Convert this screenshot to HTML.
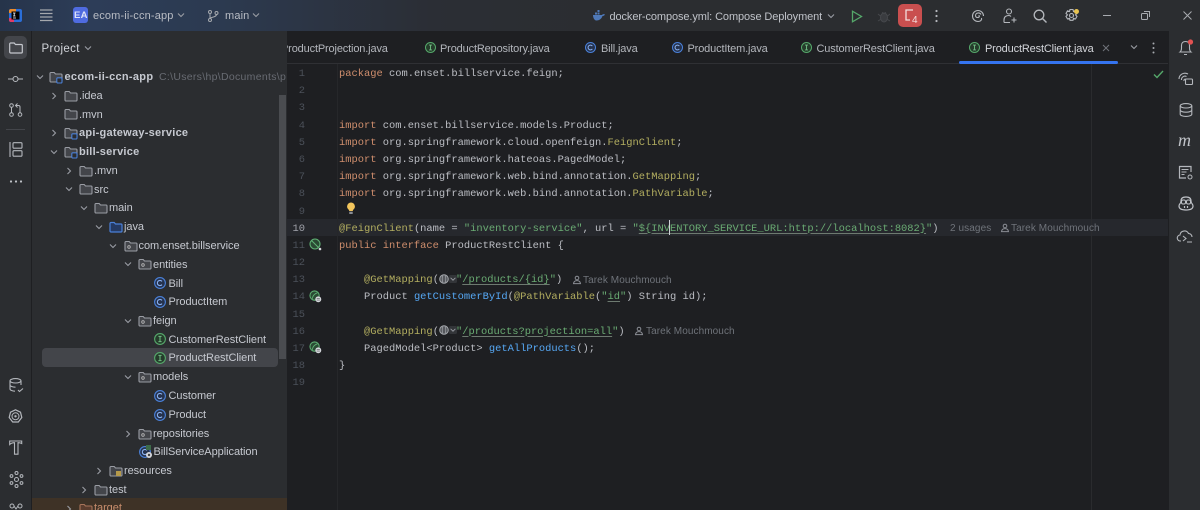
<!DOCTYPE html>
<html><head><meta charset="utf-8">
<style>
html,body{margin:0;padding:0;background:#1e1f22}
#r{position:relative;width:1200px;height:510px;overflow:hidden;background:#1e1f22;font-family:"Liberation Sans",sans-serif;color:#c9ccd3}
.a{position:absolute}
.t{position:absolute;white-space:pre;font-size:11px;line-height:14px;color:#c6c9d0;letter-spacing:-.05px}
.c{position:absolute;white-space:pre;font-family:"Liberation Mono",monospace;font-size:10.42px;line-height:14px;color:#bcbec4;left:339px;margin-top:1px}
.n{position:absolute;white-space:pre;font-family:"Liberation Mono",monospace;font-size:10.42px;line-height:14px;color:#4b5059;width:18px;text-align:right;left:287px;margin-top:1px}
.k{color:#cf8e6d}.g{color:#6aab73}.y{color:#b3ae60}.b{color:#56a8f5}.u{text-decoration:underline;text-decoration-color:#6d7a70;text-underline-offset:2px}
.h{position:absolute;white-space:pre;font-size:10px;line-height:14px;color:#6f737a;letter-spacing:.09px;margin-top:1px}
svg{position:absolute;overflow:visible;fill:none}
</style></head><body><div id="r">
<svg width="0" height="0"><defs>
<symbol id="f" viewBox="0 0 14 14"><path d="M1 3.5a1 1 0 0 1 1-1h3.2l1.3 1.5h5.5a1 1 0 0 1 1 1v6a1 1 0 0 1-1 1H2a1 1 0 0 1-1-1z" fill="#43454a" stroke="#9a9da4" stroke-width="1.1"/></symbol>
<symbol id="m" viewBox="0 0 14 14"><path d="M1 3.5a1 1 0 0 1 1-1h3.2l1.3 1.5h5.5a1 1 0 0 1 1 1v6a1 1 0 0 1-1 1H2a1 1 0 0 1-1-1z" fill="#43454a" stroke="#9a9da4" stroke-width="1.1"/><rect x="7.8" y="7.8" width="5.2" height="5.2" rx="1" fill="#2b2d30" stroke="#4a80d8" stroke-width="1.1"/></symbol>
<symbol id="p" viewBox="0 0 14 14"><path d="M1 3.5a1 1 0 0 1 1-1h3.2l1.3 1.5h5.5a1 1 0 0 1 1 1v6a1 1 0 0 1-1 1H2a1 1 0 0 1-1-1z" fill="#43454a" stroke="#9a9da4" stroke-width="1.1"/><circle cx="5" cy="8" r="1.3" stroke="#bbb" stroke-width=".8"/></symbol>
<symbol id="j" viewBox="0 0 14 14"><path d="M1 3.5a1 1 0 0 1 1-1h3.2l1.3 1.5h5.5a1 1 0 0 1 1 1v6a1 1 0 0 1-1 1H2a1 1 0 0 1-1-1z" fill="#253a63" stroke="#4a80d8" stroke-width="1.2"/></symbol>
<symbol id="cc" viewBox="0 0 14 14"><circle cx="7" cy="7" r="5.4" fill="#25324d" stroke="#4a80d8" stroke-width="1.1"/><path d="M9 5.4A2.6 2.6 0 1 0 9 8.6" stroke="#8ab0ee" stroke-width="1.1"/></symbol>
<symbol id="ci" viewBox="0 0 14 14"><circle cx="7" cy="7" r="5.4" fill="#253c2b" stroke="#55a76a" stroke-width="1.1"/><path d="M5.4 4.4h3.2M5.4 9.6h3.2M7 4.4v5.2" stroke="#70bb83" stroke-width="1"/></symbol>
<symbol id="d" viewBox="0 0 10 10"><path d="M2 3.5l3 3 3-3" stroke="#9a9da4" stroke-width="1.1"/></symbol>
<symbol id="e" viewBox="0 0 10 10"><path d="M3.5 2l3 3-3 3" stroke="#9a9da4" stroke-width="1.1"/></symbol>
<symbol id="gut" viewBox="0 0 14 14"><circle cx="6" cy="6" r="5" fill="#2a4a33" stroke="#5fb074" stroke-width="1.1"/><path d="M3.5 9.5C4 6 6 4 9 3" stroke="#5fb074"/><circle cx="10" cy="10" r="3.2" fill="#d5d7dc"/><path d="M8.3 9.2h3.4M8.3 10.8h3.4" stroke="#555" stroke-width=".7"/></symbol>
<symbol id="usr" viewBox="0 0 10 10"><circle cx="5" cy="3" r="1.8" stroke="#8a8d94"/><path d="M1.5 8.6c.3-2.4 1.6-3 3.5-3s3.2.6 3.5 3z" stroke="#8a8d94"/></symbol>
</defs></svg>

<!-- top bar -->
<div class="a" style="left:0;top:0;width:1200px;height:31px;background:linear-gradient(90deg,#26344a 0,#2d3d58 90px,#2c3a50 220px,#2b2e35 430px,#2b2d30 620px)"></div>
<svg style="left:9px;top:9px" width="13" height="13"><rect x="0" y="0" width="13" height="13" rx="2" fill="#2a6ed8"/><path d="M0 2a2 2 0 0 1 2-2h5v4H0z" fill="#e98a2c"/><path d="M0 9h5v4H2a2 2 0 0 1-2-2z" fill="#e23b66"/><rect x="2.5" y="2.5" width="8" height="8" fill="#000"/><path d="M4 4h2.5M5.2 4v3M4 7h2.5M4 9h3" stroke="#fff" stroke-width=".8"/></svg>
<svg style="left:40px;top:9px" width="13" height="13"><path d="M0 1h12.500M0 4.500h12.500M0 8h12.500M0 11.500h12.500" stroke="#a5a8ad" stroke-width="1.200"/></svg>
<div class="a" style="left:73px;top:7px;width:15px;height:16px;border-radius:3px;background:#4f6be0"></div>
<div class="t" style="left:74px;top:9px;font-size:9.500px;font-weight:bold;color:#dfe3f7;letter-spacing:.3px">EA</div>
<div class="t" style="left:93px;top:9px;color:#b8bcc4;letter-spacing:.15px">ecom-ii-ccn-app</div>
<svg style="left:176px;top:10px" width="10" height="10"><use href="#d"/></svg>
<svg style="left:208px;top:10px" width="11" height="12"><circle cx="2" cy="2" r="1.500" stroke="#a5a8ad"/><circle cx="2" cy="10" r="1.500" stroke="#a5a8ad"/><circle cx="8.500" cy="3" r="1.500" stroke="#a5a8ad"/><path d="M2 3.500v5M8.500 4.500c0 2-3 2.500-6.500 3.500" stroke="#a5a8ad"/></svg>
<div class="t" style="left:225px;top:9px;color:#b8bcc4;letter-spacing:.15px">main</div>
<svg style="left:251px;top:10px" width="10" height="10"><use href="#d"/></svg>

<svg style="left:592px;top:9px" width="14" height="13"><path d="M1 6h9c.5-1 2-1.200 3-.6-.5 1.300-1.500 1.600-2.500 1.600-1 3-3.500 4.500-6 4.500C2.500 11.500 1 9 1 6z" fill="#4f79b8"/><rect x="3" y="3.500" width="2" height="2" fill="#4f79b8"/><rect x="5.500" y="3.500" width="2" height="2" fill="#4f79b8"/><rect x="5.500" y="1" width="2" height="2" fill="#4f79b8"/></svg>
<div class="t" style="left:609.500px;top:9.500px;color:#bfc2c8;letter-spacing:-.1px">docker-compose.yml: Compose Deployment</div>
<svg style="left:826px;top:11px" width="10" height="10"><use href="#d"/></svg>
<svg style="left:851px;top:10px" width="12" height="13"><path d="M1.500 1.200v10.600L10.500 6.500z" stroke="#55a76a" stroke-width="1.300"/></svg>
<svg style="left:878px;top:10px" width="12" height="13"><ellipse cx="6" cy="7.500" rx="3.500" ry="4.500" fill="#3a3c40" stroke="#46484c"/><path d="M0 4l2.500 2M12 4L9.500 6M0 11l2.500-1.500M12 11L9.500 9.500M4 2.500l2 1 2-1" stroke="#46484c"/></svg>
<div class="a" style="left:898px;top:4px;width:24px;height:23px;border-radius:5px;background:#c94f4f"></div>
<svg style="left:904px;top:9px" width="14" height="15"><path d="M9 1H2v10h4" stroke="#f3dede" stroke-width="1.300"/></svg>
<div class="t" style="left:912px;top:14px;font-size:10px;color:#f3dede;letter-spacing:0">4</div>
<svg style="left:935px;top:9px" width="3" height="14"><circle cx="1.500" cy="2" r="1.100" fill="#b4b7bc"/><circle cx="1.500" cy="7" r="1.100" fill="#b4b7bc"/><circle cx="1.500" cy="12" r="1.100" fill="#b4b7bc"/></svg>
<svg style="left:971px;top:9px" width="14" height="14"><path d="M12.500 7A5.500 5.500 0 1 0 7 12.500c3 0 4-2 3.500-3.500M10 5.500C9 3.500 6 3.500 5 5s-.5 3.500 1.500 3.500S9 6.500 7.500 6.500" stroke="#b4b7bc" stroke-width="1.100"/></svg>
<svg style="left:1002px;top:8px" width="16" height="16"><circle cx="7" cy="3.500" r="2.500" stroke="#b4b7bc" stroke-width="1.100"/><path d="M2 14.500V12c0-3 1.500-4.500 5-4.500 1 0 1.500.5 2 1M2 14.500h6M12 9.500v5M9.500 12h5" stroke="#b4b7bc" stroke-width="1.100"/></svg>
<svg style="left:1033px;top:9px" width="14" height="14"><circle cx="6" cy="6" r="4.800" stroke="#b4b7bc" stroke-width="1.300"/><path d="M9.500 9.500l4 4" stroke="#b4b7bc" stroke-width="1.400"/></svg>
<svg style="left:1064px;top:8px" width="16" height="16"><path d="M6 1.500h3l.5 2 2-.7 1.500 2.600-1.500 1.500 1.500 1.500-1.500 2.600-2-.7-.5 2H6l-.5-2-2 .7L2 8.400 3.500 6.900 2 5.400l1.500-2.600 2 .7z" stroke="#b4b7bc" stroke-width="1.100"/><circle cx="7.500" cy="7.500" r="2" stroke="#b4b7bc" stroke-width="1.100"/><circle cx="12.500" cy="3.500" r="2.500" fill="#e8c34f"/></svg>
<div class="a" style="left:1103px;top:15px;width:8px;height:1px;background:#a8abb0"></div>
<svg style="left:1141px;top:11px" width="9" height="9"><rect x=".5" y="2.500" width="6" height="6" rx="1" stroke="#a8abb0"/><path d="M3 .5h5.500V6" stroke="#a8abb0"/></svg>
<svg style="left:1183px;top:11px" width="9" height="9"><path d="M.5.500l8 8M8.500.500l-8 8" stroke="#a8abb0"/></svg>

<!-- left stripe -->
<div class="a" style="left:0;top:31px;width:31px;height:479px;background:#2b2d30;border-right:1px solid #1e1f22"></div>
<div class="a" style="left:4px;top:36px;width:23px;height:23px;border-radius:5px;background:#43454a"></div>
<svg style="left:9px;top:42px" width="14" height="12"><path d="M.7 2a1 1 0 0 1 1-1h3.500l1.300 1.500h5.800a1 1 0 0 1 1 1v6.500a1 1 0 0 1-1 1H1.700a1 1 0 0 1-1-1z" stroke="#c5c8ce" stroke-width="1.200"/></svg>
<svg style="left:8px;top:74px" width="15" height="10"><circle cx="7.500" cy="5" r="2.500" stroke="#b4b7bc" stroke-width="1.100"/><path d="M0 5h5M10 5h5" stroke="#b4b7bc" stroke-width="1.100"/></svg>
<svg style="left:9px;top:103px" width="14" height="14"><circle cx="2.500" cy="2.500" r="1.800" stroke="#b4b7bc"/><circle cx="2.500" cy="11.500" r="1.800" stroke="#b4b7bc"/><circle cx="11" cy="11.500" r="1.800" stroke="#b4b7bc"/><path d="M2.500 4.500v5M11 9.500V4c0-1-.5-1.500-1.500-1.500H7M8.500.5l-2 2 2 2" stroke="#b4b7bc"/></svg>
<div class="a" style="left:6px;top:129px;width:19px;height:1px;background:#43454a"></div>
<svg style="left:9px;top:142px" width="14" height="15"><rect x="4" y=".7" width="9" height="5.500" rx="1" stroke="#b4b7bc" stroke-width="1.100"/><rect x="4" y="8.700" width="9" height="5.500" rx="1" stroke="#b4b7bc" stroke-width="1.100"/><path d="M1 0v15" stroke="#b4b7bc" stroke-width="1.100"/></svg>
<svg style="left:9px;top:180px" width="14" height="3"><circle cx="2" cy="1.500" r="1.100" fill="#c0c3c8"/><circle cx="7" cy="1.500" r="1.100" fill="#c0c3c8"/><circle cx="12" cy="1.500" r="1.100" fill="#c0c3c8"/></svg>
<svg style="left:9px;top:378px" width="15" height="15"><ellipse cx="6.500" cy="2.800" rx="5.500" ry="2.200" stroke="#b4b7bc" stroke-width="1.100"/><path d="M1 3v8c0 1.200 2.500 2.200 5 2.200M12 3v4M1 7c0 1.200 2.500 2.200 5.500 2.200M9 12l1.500 1.500 3.500-3" stroke="#b4b7bc" stroke-width="1.100"/></svg>
<svg style="left:8px;top:409px" width="15" height="15"><path d="M7.500.8l5 2.400 1.300 5.300-3.500 4.500H4.700L1.200 8.500l1.300-5.300z" stroke="#b4b7bc" stroke-width="1.200"/><circle cx="7.500" cy="7.300" r="3.500" stroke="#b4b7bc"/><circle cx="7.500" cy="7.300" r="1.200" fill="#b4b7bc"/></svg>
<svg style="left:9px;top:440px" width="14" height="15"><path d="M.7 1h12v2.500c-1-.5-2-.8-3.500-.8H9v11.500H5.500V2.700C3.500 2.700 2 3.200.7 4.500z" stroke="#b4b7bc" stroke-width="1.100"/></svg>
<svg style="left:10px;top:471px" width="13" height="17"><circle cx="6.500" cy="8.500" r="2" stroke="#b4b7bc"/><circle cx="6.500" cy="2" r="1.500" stroke="#b4b7bc"/><circle cx="6.500" cy="15" r="1.500" stroke="#b4b7bc"/><circle cx="1.500" cy="5" r="1.400" stroke="#b4b7bc"/><circle cx="11.500" cy="5" r="1.400" stroke="#b4b7bc"/><circle cx="1.500" cy="12" r="1.400" stroke="#b4b7bc"/><circle cx="11.500" cy="12" r="1.400" stroke="#b4b7bc"/></svg>
<svg style="left:9px;top:503px" width="14" height="10"><circle cx="3" cy="3" r="2" stroke="#b4b7bc"/><circle cx="11" cy="3" r="2" stroke="#b4b7bc"/><path d="M5 3l2 3 2-3" stroke="#b4b7bc"/></svg>

<!-- project panel -->
<div class="a" style="left:32px;top:31px;width:255px;height:479px;background:#2b2d30"></div>
<div class="a" style="left:32px;top:498px;width:255px;height:12px;background:#3e3226"></div>
<div class="a" style="left:279px;top:95px;width:7px;height:264px;background:#4a4c50"></div>
<div class="a" style="left:42px;top:348px;width:236px;height:19px;border-radius:4px;background:#43454a"></div>
<div class="t" style="left:41.500px;top:41.500px;font-size:11.500px;color:#d2d5da;letter-spacing:.35px">Project</div>
<svg style="left:83px;top:43px" width="10" height="10"><use href="#d"/></svg>

<svg style="left:35px;top:72px" width="10" height="10"><use href="#d"/></svg>
<svg style="left:49px;top:70px" width="14" height="14"><use href="#m"/></svg>
<div class="t" style="left:64.500px;top:70px;font-weight:bold;letter-spacing:.3px;font-size:11px">ecom-ii-ccn-app</div>
<div class="a" style="left:159px;top:70px;width:128px;height:14px;overflow:hidden"><div class="t" style="left:0;top:0;color:#686b72;font-size:10.500px;letter-spacing:.3px">C:\Users\hp\Documents\p</div></div>

<svg style="left:49px;top:91px" width="10" height="10"><use href="#e"/></svg>
<svg style="left:64px;top:89px" width="14" height="14"><use href="#f"/></svg>
<div class="t" style="left:79px;top:89px">.idea</div>
<svg style="left:64px;top:107px" width="14" height="14"><use href="#f"/></svg>
<div class="t" style="left:79px;top:107.500px">.mvn</div>
<svg style="left:49px;top:128px" width="10" height="10"><use href="#e"/></svg>
<svg style="left:64px;top:126px" width="14" height="14"><use href="#m"/></svg>
<div class="t" style="left:79px;top:126px;font-weight:bold;letter-spacing:.25px">api-gateway-service</div>
<svg style="left:49px;top:147px" width="10" height="10"><use href="#d"/></svg>
<svg style="left:64px;top:145px" width="14" height="14"><use href="#m"/></svg>
<div class="t" style="left:79px;top:145px;font-weight:bold;letter-spacing:.25px">bill-service</div>
<svg style="left:64px;top:166px" width="10" height="10"><use href="#e"/></svg>
<svg style="left:79px;top:164px" width="14" height="14"><use href="#f"/></svg>
<div class="t" style="left:94px;top:164px">.mvn</div>
<svg style="left:64px;top:184px" width="10" height="10"><use href="#d"/></svg>
<svg style="left:79px;top:182px" width="14" height="14"><use href="#f"/></svg>
<div class="t" style="left:94px;top:182.500px">src</div>
<svg style="left:79px;top:203px" width="10" height="10"><use href="#d"/></svg>
<svg style="left:94px;top:201px" width="14" height="14"><use href="#f"/></svg>
<div class="t" style="left:109px;top:201px">main</div>
<svg style="left:94px;top:222px" width="10" height="10"><use href="#d"/></svg>
<svg style="left:109px;top:220px" width="14" height="14"><use href="#j"/></svg>
<div class="t" style="left:124px;top:220px">java</div>
<svg style="left:108px;top:241px" width="10" height="10"><use href="#d"/></svg>
<svg style="left:124px;top:239px" width="14" height="14"><use href="#p"/></svg>
<div class="t" style="left:138.500px;top:239px">com.enset.billservice</div>
<svg style="left:123px;top:259px" width="10" height="10"><use href="#d"/></svg>
<svg style="left:138px;top:257px" width="14" height="14"><use href="#p"/></svg>
<div class="t" style="left:153px;top:257.500px">entities</div>
<svg style="left:153px;top:276px" width="14" height="14"><use href="#cc"/></svg>
<div class="t" style="left:168.500px;top:276.500px">Bill</div>
<svg style="left:153px;top:295px" width="14" height="14"><use href="#cc"/></svg>
<div class="t" style="left:168.500px;top:295px">ProductItem</div>
<svg style="left:123px;top:316px" width="10" height="10"><use href="#d"/></svg>
<svg style="left:138px;top:314px" width="14" height="14"><use href="#p"/></svg>
<div class="t" style="left:153px;top:314px">feign</div>
<svg style="left:153px;top:332px" width="14" height="14"><use href="#ci"/></svg>
<div class="t" style="left:168.500px;top:332.500px">CustomerRestClient</div>
<svg style="left:153px;top:351px" width="14" height="14"><use href="#ci"/></svg>
<div class="t" style="left:168.500px;top:351px">ProductRestClient</div>
<svg style="left:123px;top:372px" width="10" height="10"><use href="#d"/></svg>
<svg style="left:138px;top:370px" width="14" height="14"><use href="#p"/></svg>
<div class="t" style="left:153px;top:370px">models</div>
<svg style="left:153px;top:389px" width="14" height="14"><use href="#cc"/></svg>
<div class="t" style="left:168.500px;top:389px">Customer</div>
<svg style="left:153px;top:408px" width="14" height="14"><use href="#cc"/></svg>
<div class="t" style="left:168.500px;top:408px">Product</div>
<svg style="left:123px;top:429px" width="10" height="10"><use href="#e"/></svg>
<svg style="left:138px;top:427px" width="14" height="14"><use href="#p"/></svg>
<div class="t" style="left:153px;top:426.500px">repositories</div>
<svg style="left:138px;top:445px" width="14" height="14"><use href="#cc"/></svg>
<svg style="left:145px;top:451px" width="8" height="8"><circle cx="4" cy="4" r="3" fill="#d5d7dc"/><circle cx="4" cy="4" r="1.200" fill="#444"/></svg>
<svg style="left:146px;top:445px" width="6" height="6"><rect width="5" height="5" fill="#3d6b49"/></svg>
<div class="t" style="left:153.500px;top:445px">BillServiceApplication</div>
<svg style="left:94px;top:466px" width="10" height="10"><use href="#e"/></svg>
<svg style="left:109px;top:464px" width="14" height="14"><use href="#f"/></svg>
<svg style="left:116px;top:471px" width="6" height="6"><rect width="5" height="5" fill="#b59a4a"/></svg>
<div class="t" style="left:124px;top:464px">resources</div>
<svg style="left:79px;top:485px" width="10" height="10"><use href="#e"/></svg>
<svg style="left:94px;top:483px" width="14" height="14"><use href="#f"/></svg>
<div class="t" style="left:109px;top:483px">test</div>
<svg style="left:64px;top:504px" width="10" height="10"><use href="#e"/></svg>
<svg style="left:79px;top:502px" width="14" height="14"><path d="M1 3.500a1 1 0 0 1 1-1h3.200l1.300 1.500h5.500a1 1 0 0 1 1 1v6a1 1 0 0 1-1 1H2a1 1 0 0 1-1-1z" fill="#5a3d2e" stroke="#a8745a" stroke-width="1.100"/></svg>
<div class="t" style="left:94px;top:501px;color:#c98e6d">target</div>

<!-- tabs -->
<div class="a" style="left:287px;top:31px;width:881px;height:32px;background:#1e1f22;border-bottom:1px solid #2f3034"></div>
<div class="a" style="left:287px;top:41px;width:110px;height:16px;overflow:hidden"><div class="t" style="left:-6px;top:1px;color:#b3b6bc;letter-spacing:-.15px">ProductProjection.java</div></div>
<svg style="left:424px;top:41px" width="13" height="13"><use href="#ci"/></svg>
<div class="t" style="left:440px;top:42px;color:#b3b6bc;letter-spacing:-.15px">ProductRepository.java</div>
<svg style="left:584px;top:41px" width="13" height="13"><use href="#cc"/></svg>
<div class="t" style="left:601px;top:42px;color:#b3b6bc;letter-spacing:-.15px">Bill.java</div>
<svg style="left:671px;top:41px" width="13" height="13"><use href="#cc"/></svg>
<div class="t" style="left:687.500px;top:42px;color:#b3b6bc;letter-spacing:-.15px">ProductItem.java</div>
<svg style="left:800px;top:41px" width="13" height="13"><use href="#ci"/></svg>
<div class="t" style="left:816.500px;top:42px;color:#b3b6bc;letter-spacing:-.15px">CustomerRestClient.java</div>
<svg style="left:968px;top:41px" width="13" height="13"><use href="#ci"/></svg>
<div class="t" style="left:985px;top:42px;color:#d3d5da;letter-spacing:-.15px">ProductRestClient.java</div>
<svg style="left:1102px;top:44px" width="8" height="8"><path d="M1 1l6 6M7 1L1 7" stroke="#6f737a"/></svg>
<div class="a" style="left:959px;top:61px;width:159px;height:3px;border-radius:2px;background:#3574f0"></div>
<svg style="left:1129px;top:42px" width="10" height="10"><use href="#d"/></svg>
<svg style="left:1152px;top:42px" width="3" height="12"><circle cx="1.500" cy="1.500" r="1" fill="#a8abb0"/><circle cx="1.500" cy="6" r="1" fill="#a8abb0"/><circle cx="1.500" cy="10.500" r="1" fill="#a8abb0"/></svg>

<!-- editor -->
<div class="a" style="left:287px;top:219px;width:881px;height:17px;background:#26282d"></div>
<div class="a" style="left:337px;top:64px;width:1px;height:446px;background:#26272a"></div>
<div class="a" style="left:1091px;top:64px;width:1px;height:446px;background:#2a2b2e"></div>
<div class="n" style="top:66px">1</div>
<div class="n" style="top:83px">2</div>
<div class="n" style="top:100px">3</div>
<div class="n" style="top:117.500px">4</div>
<div class="n" style="top:134.500px">5</div>
<div class="n" style="top:152px">6</div>
<div class="n" style="top:169px">7</div>
<div class="n" style="top:186px">8</div>
<div class="n" style="top:203.500px">9</div>
<div class="n" style="top:220.500px;color:#a1a3ab">10</div>
<div class="n" style="top:237.500px">11</div>
<div class="n" style="top:255px">12</div>
<div class="n" style="top:272px">13</div>
<div class="n" style="top:289px">14</div>
<div class="n" style="top:306.500px">15</div>
<div class="n" style="top:323.500px">16</div>
<div class="n" style="top:341px">17</div>
<div class="n" style="top:358px">18</div>
<div class="n" style="top:375px">19</div>

<div class="c" style="top:66px"><span class="k">package</span> com.enset.billservice.feign;</div>
<div class="c" style="top:117.500px"><span class="k">import</span> com.enset.billservice.models.Product;</div>
<div class="c" style="top:134.500px"><span class="k">import</span> org.springframework.cloud.openfeign.<span class="y">FeignClient</span>;</div>
<div class="c" style="top:152px"><span class="k">import</span> org.springframework.hateoas.PagedModel;</div>
<div class="c" style="top:169px"><span class="k">import</span> org.springframework.web.bind.annotation.<span class="y">GetMapping</span>;</div>
<div class="c" style="top:186px"><span class="k">import</span> org.springframework.web.bind.annotation.<span class="y">PathVariable</span>;</div>
<div class="c" style="top:220.500px"><span class="y">@FeignClient</span>(name = <span class="g">"inventory-service"</span>, url = <span class="g">"<span class="u">${INVENTORY_SERVICE_URL:http://localhost:8082}</span>"</span>)</div>
<div class="a" style="left:669px;top:220px;width:1px;height:15px;background:#ced0d6"></div>
<div class="c" style="top:237.500px"><span class="k">public interface</span> ProductRestClient {</div>
<div class="c" style="top:272px">    <span class="y">@GetMapping</span>(</div>
<div class="c" style="left:456px;top:272px"><span class="g">"<span class="u">/products/{id}</span>"</span>)</div>
<div class="c" style="top:289px">    Product <span class="b">getCustomerById</span>(<span class="y">@PathVariable</span>(<span class="g">"<span class="u">id</span>"</span>) String id);</div>
<div class="c" style="top:323.500px">    <span class="y">@GetMapping</span>(</div>
<div class="c" style="left:456px;top:323.500px"><span class="g">"<span class="u">/products?projection=all</span>"</span>)</div>
<div class="c" style="top:341px">    PagedModel&lt;Product&gt; <span class="b">getAllProducts</span>();</div>
<div class="c" style="top:358px">}</div>

<svg style="left:346px;top:202px" width="10" height="13"><path d="M5 .5a4 4 0 0 0-2.500 7c.5.500.7 1 .7 1.500h3.600c0-.5.2-1 .7-1.500A4 4 0 0 0 5 .5z" fill="#f2c55c"/><rect x="3.300" y="9.700" width="3.400" height="2.300" fill="#8a8d94"/></svg>
<svg style="left:309px;top:238px" width="14" height="14"><circle cx="6" cy="6" r="5" fill="#2a4a33" stroke="#5fb074" stroke-width="1.100"/><path d="M2.500 2.500l7 7" stroke="#5fb074" stroke-width="1.100"/><circle cx="11" cy="11" r="1.300" fill="#d5d7dc"/></svg>
<svg style="left:309px;top:290px" width="13" height="13"><use href="#gut"/></svg>
<svg style="left:309px;top:341px" width="13" height="13"><use href="#gut"/></svg>

<svg style="left:439px;top:274px" width="10" height="10"><circle cx="5" cy="5" r="4.300" fill="#3a3c40" stroke="#a5a8ad"/><ellipse cx="5" cy="5" rx="1.800" ry="4.300" stroke="#a5a8ad" stroke-width=".7"/><path d="M.7 5h8.600M1.500 3h7M1.500 7h7" stroke="#a5a8ad" stroke-width=".6"/></svg>
<svg style="left:449px;top:275px" width="8" height="8" viewBox="0 0 10 10"><rect width="10" height="10" rx="2" fill="#333539"/><use href="#d" width="10" height="10"/></svg>
<svg style="left:439px;top:325px" width="10" height="10"><circle cx="5" cy="5" r="4.300" fill="#3a3c40" stroke="#a5a8ad"/><ellipse cx="5" cy="5" rx="1.800" ry="4.300" stroke="#a5a8ad" stroke-width=".7"/><path d="M.7 5h8.600M1.500 3h7M1.500 7h7" stroke="#a5a8ad" stroke-width=".6"/></svg>
<svg style="left:449px;top:326px" width="8" height="8" viewBox="0 0 10 10"><rect width="10" height="10" rx="2" fill="#333539"/><use href="#d" width="10" height="10"/></svg>

<div class="h" style="left:950px;top:221px">2 usages</div>
<svg style="left:1000px;top:223px" width="10" height="10"><use href="#usr"/></svg>
<div class="h" style="left:1011px;top:221px">Tarek Mouchmouch</div>
<svg style="left:572px;top:275px" width="10" height="10"><use href="#usr"/></svg>
<div class="h" style="left:583px;top:273px">Tarek Mouchmouch</div>
<svg style="left:634px;top:326px" width="10" height="10"><use href="#usr"/></svg>
<div class="h" style="left:646px;top:324px">Tarek Mouchmouch</div>

<svg style="left:1153px;top:70px" width="11" height="9"><path d="M1 4.500l3 3 6-6.500" stroke="#55a76a" stroke-width="1.400"/></svg>

<!-- right stripe -->
<div class="a" style="left:1168px;top:31px;width:32px;height:479px;background:#2b2d30;border-left:1px solid #1e1f22"></div>
<svg style="left:1178px;top:39px" width="16" height="17"><path d="M2 13c1.200-1 1.500-2 1.500-4V6.500c0-2.500 1.500-4 4-4s4 1.500 4 4V9c0 2 .3 3 1.500 4zM6 15.500h3" stroke="#b4b7bc" stroke-width="1.100"/><circle cx="12.500" cy="3" r="2.600" fill="#e35252"/></svg>
<svg style="left:1178px;top:71px" width="16" height="16"><path d="M1 8a6 6 0 0 1 9-5M3.500 9a3.500 3.500 0 0 1 5-3.500M6 10a1.500 1.500 0 0 1 1.500-2" stroke="#b4b7bc" stroke-width="1.100"/><rect x="7.500" y="8" width="7" height="5.500" rx="1" stroke="#b4b7bc" stroke-width="1.100"/></svg>
<svg style="left:1179px;top:103px" width="14" height="14"><ellipse cx="7" cy="2.800" rx="5.800" ry="2.200" stroke="#b4b7bc" stroke-width="1.100"/><path d="M1.200 2.800v8.400c0 1.200 2.600 2.200 5.800 2.200s5.800-1 5.800-2.200V2.800M1.200 7c0 1.200 2.600 2.200 5.800 2.200S12.800 8.200 12.800 7" stroke="#b4b7bc" stroke-width="1.100"/></svg>
<div class="a" style="left:1178px;top:131px;font:italic 18px/18px 'Liberation Serif',serif;color:#c0c3c8">m</div>
<svg style="left:1178px;top:165px" width="15" height="15"><path d="M13 7V1.500H1.500v11.500H8" stroke="#b4b7bc" stroke-width="1.200"/><path d="M3.500 4.500h7M3.500 7h5M3.500 9.500h3" stroke="#b4b7bc"/><circle cx="12" cy="12" r="2" stroke="#b4b7bc"/></svg>
<svg style="left:1178px;top:196px" width="16" height="15"><path d="M3 5c0-3 2-4 5-4s5 1 5 4 2 2.500 2 5-2 4-7 4-7-1.500-7-4 2-2 2-5z" stroke="#c0c3c8" stroke-width="1.200"/><rect x="3.500" y="4" width="4" height="4" rx="1.500" stroke="#c0c3c8"/><rect x="8.500" y="4" width="4" height="4" rx="1.500" stroke="#c0c3c8"/><path d="M6.500 10v2M9.500 10v2" stroke="#c0c3c8" stroke-width="1.200"/></svg>
<svg style="left:1177px;top:229px" width="17" height="14"><path d="M4 12H3.500A3 3 0 0 1 3 6a4.500 4.500 0 0 1 8.500-1.500A3.500 3.500 0 0 1 15 8" stroke="#b4b7bc" stroke-width="1.100"/><path d="M6 7l3 2.500L6 12M10 13h5" stroke="#b4b7bc" stroke-width="1.100"/></svg>
</div></body></html>
